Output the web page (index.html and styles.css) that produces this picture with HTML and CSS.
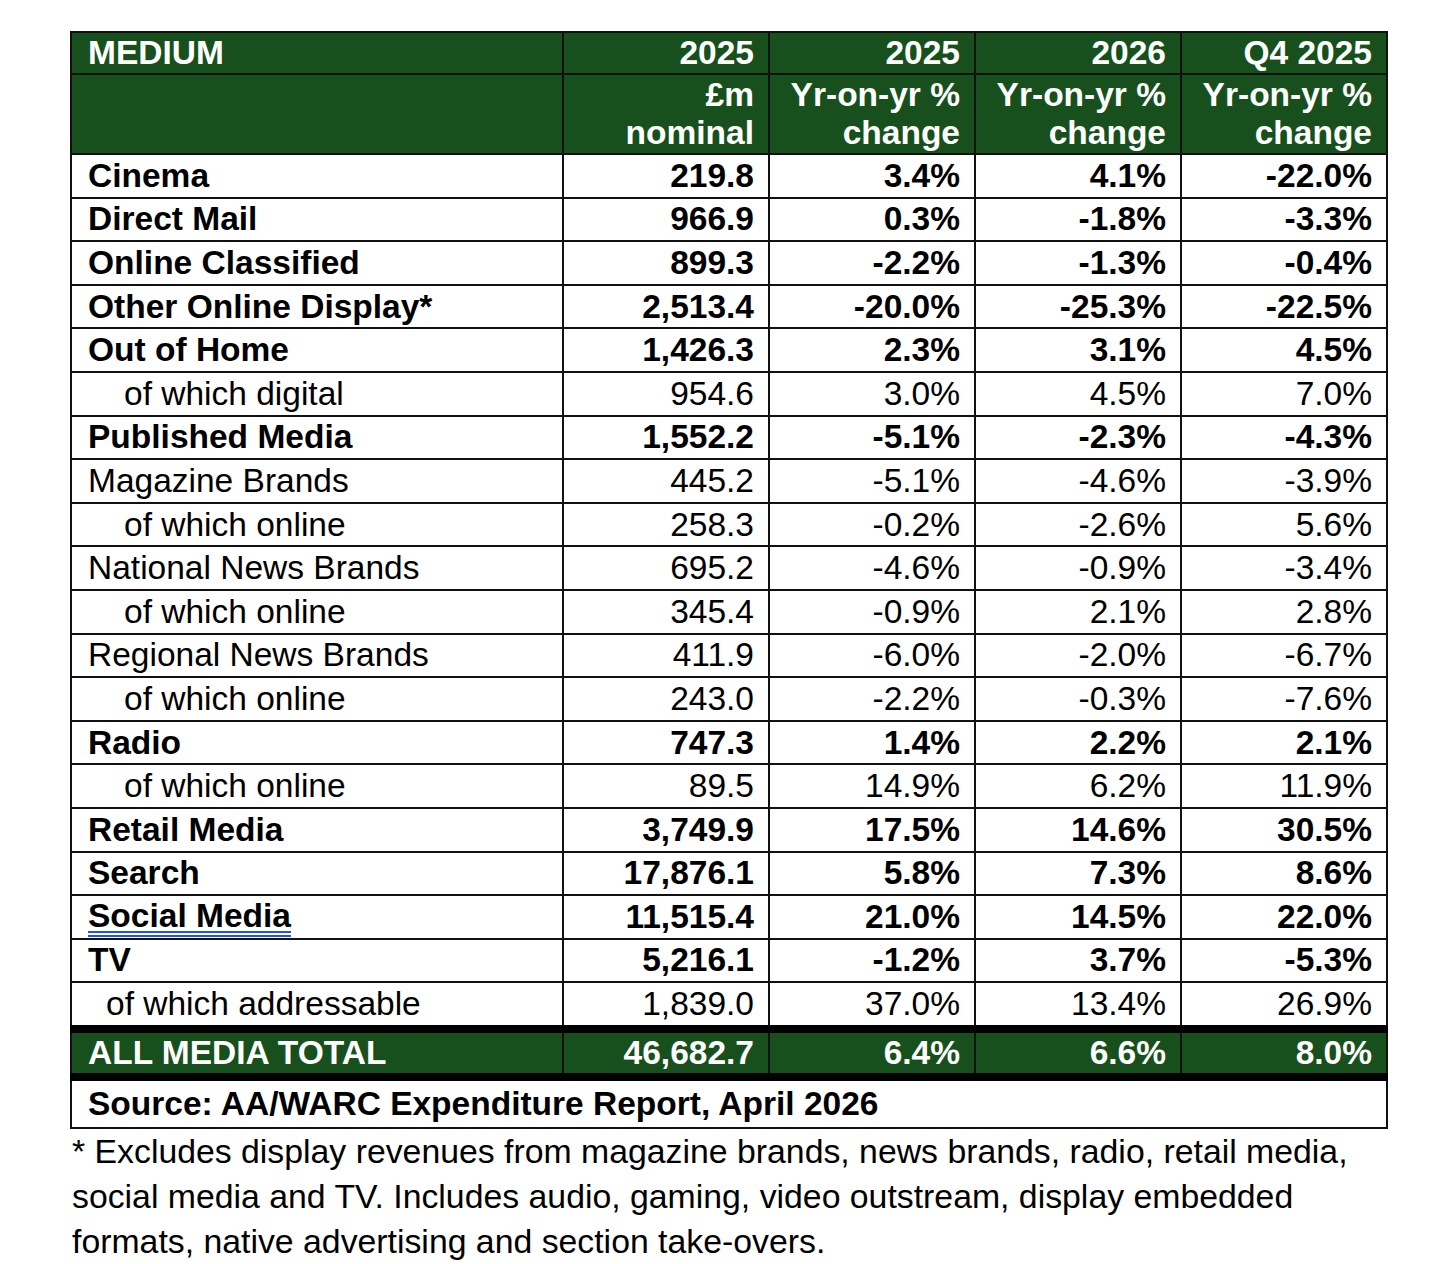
FILE: index.html
```html
<!DOCTYPE html>
<html lang="en">
<head>
<meta charset="utf-8">
<title>AA/WARC Expenditure Report</title>
<link rel="stylesheet" href="styles.css">
</head>
<body>
<div class="page">
  <table class="adspend">
    <colgroup>
      <col class="c-medium">
      <col class="c-num">
      <col class="c-num">
      <col class="c-num">
      <col class="c-num">
    </colgroup>
    <thead>
      <tr class="head1">
        <th class="lab">MEDIUM</th>
        <th>2025</th>
        <th>2025</th>
        <th>2026</th>
        <th>Q4 2025</th>
      </tr>
      <tr class="head2">
        <th class="lab"></th>
        <th>£m<br>nominal</th>
        <th>Yr-on-yr %<br>change</th>
        <th>Yr-on-yr %<br>change</th>
        <th>Yr-on-yr %<br>change</th>
      </tr>
    </thead>
    <tbody>
      <tr class="b"><td class="lab">Cinema</td><td>219.8</td><td>3.4%</td><td>4.1%</td><td>-22.0%</td></tr>
      <tr class="b"><td class="lab">Direct Mail</td><td>966.9</td><td>0.3%</td><td>-1.8%</td><td>-3.3%</td></tr>
      <tr class="b"><td class="lab">Online Classified</td><td>899.3</td><td>-2.2%</td><td>-1.3%</td><td>-0.4%</td></tr>
      <tr class="b"><td class="lab">Other Online Display*</td><td>2,513.4</td><td>-20.0%</td><td>-25.3%</td><td>-22.5%</td></tr>
      <tr class="b"><td class="lab">Out of Home</td><td>1,426.3</td><td>2.3%</td><td>3.1%</td><td>4.5%</td></tr>
      <tr><td class="lab sub">of which digital</td><td>954.6</td><td>3.0%</td><td>4.5%</td><td>7.0%</td></tr>
      <tr class="b"><td class="lab">Published Media</td><td>1,552.2</td><td>-5.1%</td><td>-2.3%</td><td>-4.3%</td></tr>
      <tr><td class="lab">Magazine Brands</td><td>445.2</td><td>-5.1%</td><td>-4.6%</td><td>-3.9%</td></tr>
      <tr><td class="lab sub">of which online</td><td>258.3</td><td>-0.2%</td><td>-2.6%</td><td>5.6%</td></tr>
      <tr><td class="lab">National News Brands</td><td>695.2</td><td>-4.6%</td><td>-0.9%</td><td>-3.4%</td></tr>
      <tr><td class="lab sub">of which online</td><td>345.4</td><td>-0.9%</td><td>2.1%</td><td>2.8%</td></tr>
      <tr><td class="lab">Regional News Brands</td><td>411.9</td><td>-6.0%</td><td>-2.0%</td><td>-6.7%</td></tr>
      <tr><td class="lab sub">of which online</td><td>243.0</td><td>-2.2%</td><td>-0.3%</td><td>-7.6%</td></tr>
      <tr class="b"><td class="lab">Radio</td><td>747.3</td><td>1.4%</td><td>2.2%</td><td>2.1%</td></tr>
      <tr><td class="lab sub">of which online</td><td>89.5</td><td>14.9%</td><td>6.2%</td><td>11.9%</td></tr>
      <tr class="b"><td class="lab">Retail Media</td><td>3,749.9</td><td>17.5%</td><td>14.6%</td><td>30.5%</td></tr>
      <tr class="b"><td class="lab">Search</td><td>17,876.1</td><td>5.8%</td><td>7.3%</td><td>8.6%</td></tr>
      <tr class="b"><td class="lab"><span class="link">Social Media</span></td><td>11,515.4</td><td>21.0%</td><td>14.5%</td><td>22.0%</td></tr>
      <tr class="b"><td class="lab">TV</td><td>5,216.1</td><td>-1.2%</td><td>3.7%</td><td>-5.3%</td></tr>
      <tr><td class="lab sub2">of which addressable</td><td>1,839.0</td><td>37.0%</td><td>13.4%</td><td>26.9%</td></tr>
      <tr class="total"><td class="lab">ALL MEDIA TOTAL</td><td>46,682.7</td><td>6.4%</td><td>6.6%</td><td>8.0%</td></tr>
      <tr class="source"><td class="lab" colspan="5">Source: AA/WARC Expenditure Report, April 2026</td></tr>
    </tbody>
  </table>
  <p class="note">* Excludes display revenues from magazine brands, news brands, radio, retail media,<br>social media and TV. Includes audio, gaming, video outstream, display embedded<br>formats, native advertising and section take-overs.</p>
</div>
</body>
</html>
```

FILE: styles.css
```css
html, body {
  margin: 0;
  padding: 0;
  background: #ffffff;
}

body {
  font-family: "Liberation Sans", Arial, sans-serif;
  color: #000;
}

.page {
  padding: 31px 0 0 70px;
  width: 1316px;
}

.adspend {
  border-collapse: collapse;
  width: 1316px;
  table-layout: fixed;
  font-size: 33.5px;
  border: 2px solid #111;
}

.c-medium { width: 492px; }
.c-num { width: 206px; }

.adspend th,
.adspend td {
  border: 2px solid #111;
  padding: 0 14px 0 16px;
  text-align: right;
  vertical-align: middle;
  white-space: nowrap;
}

.adspend .lab {
  text-align: left;
}

.adspend thead th {
  background: #17501d;
  color: #fff;
  font-weight: bold;
}

.head1 th {
  height: 40px;
  line-height: 38px;
}

.head2 th {
  height: 78px;
  line-height: 38px;
}

.adspend tbody td {
  height: 41.6px;
  line-height: 38px;
  font-weight: normal;
}

.adspend tbody tr.b td {
  font-weight: bold;
}

.adspend td.sub {
  padding-left: 52px;
}

.adspend td.sub2 {
  padding-left: 34px;
}

.link {
  border-bottom: 6px double #2352e0;
  line-height: 30px;
  display: inline-block;
}

.adspend tr.total td {
  background: #17501d;
  color: #fff;
  font-weight: bold;
  border-top: 8px solid #000;
  border-bottom: 8px solid #000;
  height: 40px;
}

.adspend tr.source td {
  font-weight: bold;
  height: 46px;
}

.note {
  margin: 0 0 0 2px;
  font-size: 33.8px;
  line-height: 45px;
  white-space: nowrap;
}
```
